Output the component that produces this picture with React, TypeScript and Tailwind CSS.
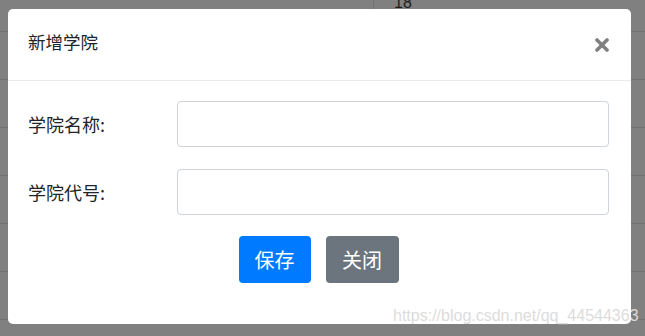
export default function App() {
  const rows = [0, 1, 2, 3, 4, 5]

  return (
    <div className="relative h-[336px] w-[645px] overflow-hidden bg-[#808080] font-['Liberation_Sans','Noto_Sans_CJK_SC',sans-serif]">
      {/* Dimmed table behind the modal */}
      <div className="flex flex-col">
        <div className="flex h-[32px] border-b border-[#6f7173]">
          <div className="w-[374px] border-r border-[#6f7173]" />
          <div className="-mt-[7px] pl-[20px] text-[16px] leading-[20px] text-[#1c1c1c]">18</div>
        </div>
        {rows.map((r) => (
          <div key={r} className="h-[48px] border-b border-[#6f7173]" />
        ))}
      </div>

      {/* Modal */}
      <div className="absolute left-[8px] top-[9px] flex h-[315px] w-[623px] flex-col rounded-[5px] bg-white font-['Noto_Sans_CJK_SC','Liberation_Sans',sans-serif] text-[#212529]">
        <div className="flex h-[72px] items-start justify-between border-b border-[#e9ecef] pl-[20px] pr-[22px]">
          <h5 className="pt-[20px] text-[17.5px] leading-[26px]">新增学院</h5>
          <button className="mt-[29px] text-[#808080]">
            <svg width="14" height="14" viewBox="0 0 14 14">
              <path d="M2 2L12 12M12 2L2 12" stroke="currentColor" strokeWidth="3.6" strokeLinecap="round" />
            </svg>
          </button>
        </div>

        <div className="flex flex-col pl-[20px] pr-[22px] pt-[20px]">
          <div className="flex items-center">
            <label className="w-[149px] text-[18px] leading-[26px]">学院名称:</label>
            <input className="h-[46px] flex-1 rounded-[4px] border border-[#ced4da] bg-white px-3 outline-none" />
          </div>
          <div className="mt-[22px] flex items-center">
            <label className="w-[149px] text-[18px] leading-[26px]">学院代号:</label>
            <input className="h-[46px] flex-1 rounded-[4px] border border-[#ced4da] bg-white px-3 outline-none" />
          </div>
          <div className="mt-[21px] flex justify-center gap-[15px]">
            <button className="h-[47px] w-[72px] rounded-[4px] bg-[#007bff] text-[20px] text-white">保存</button>
            <button className="h-[47px] w-[73px] rounded-[4px] bg-[#6c757d] text-[20px] text-white">关闭</button>
          </div>
        </div>
      </div>

      {/* Watermark */}
      <div className="absolute left-[393px] top-[306px] text-[16px] leading-[20px] text-[#dcdcdc] font-['Liberation_Sans',sans-serif]">
        https://blog.csdn.net/qq_44544363
      </div>
    </div>
  )
}
